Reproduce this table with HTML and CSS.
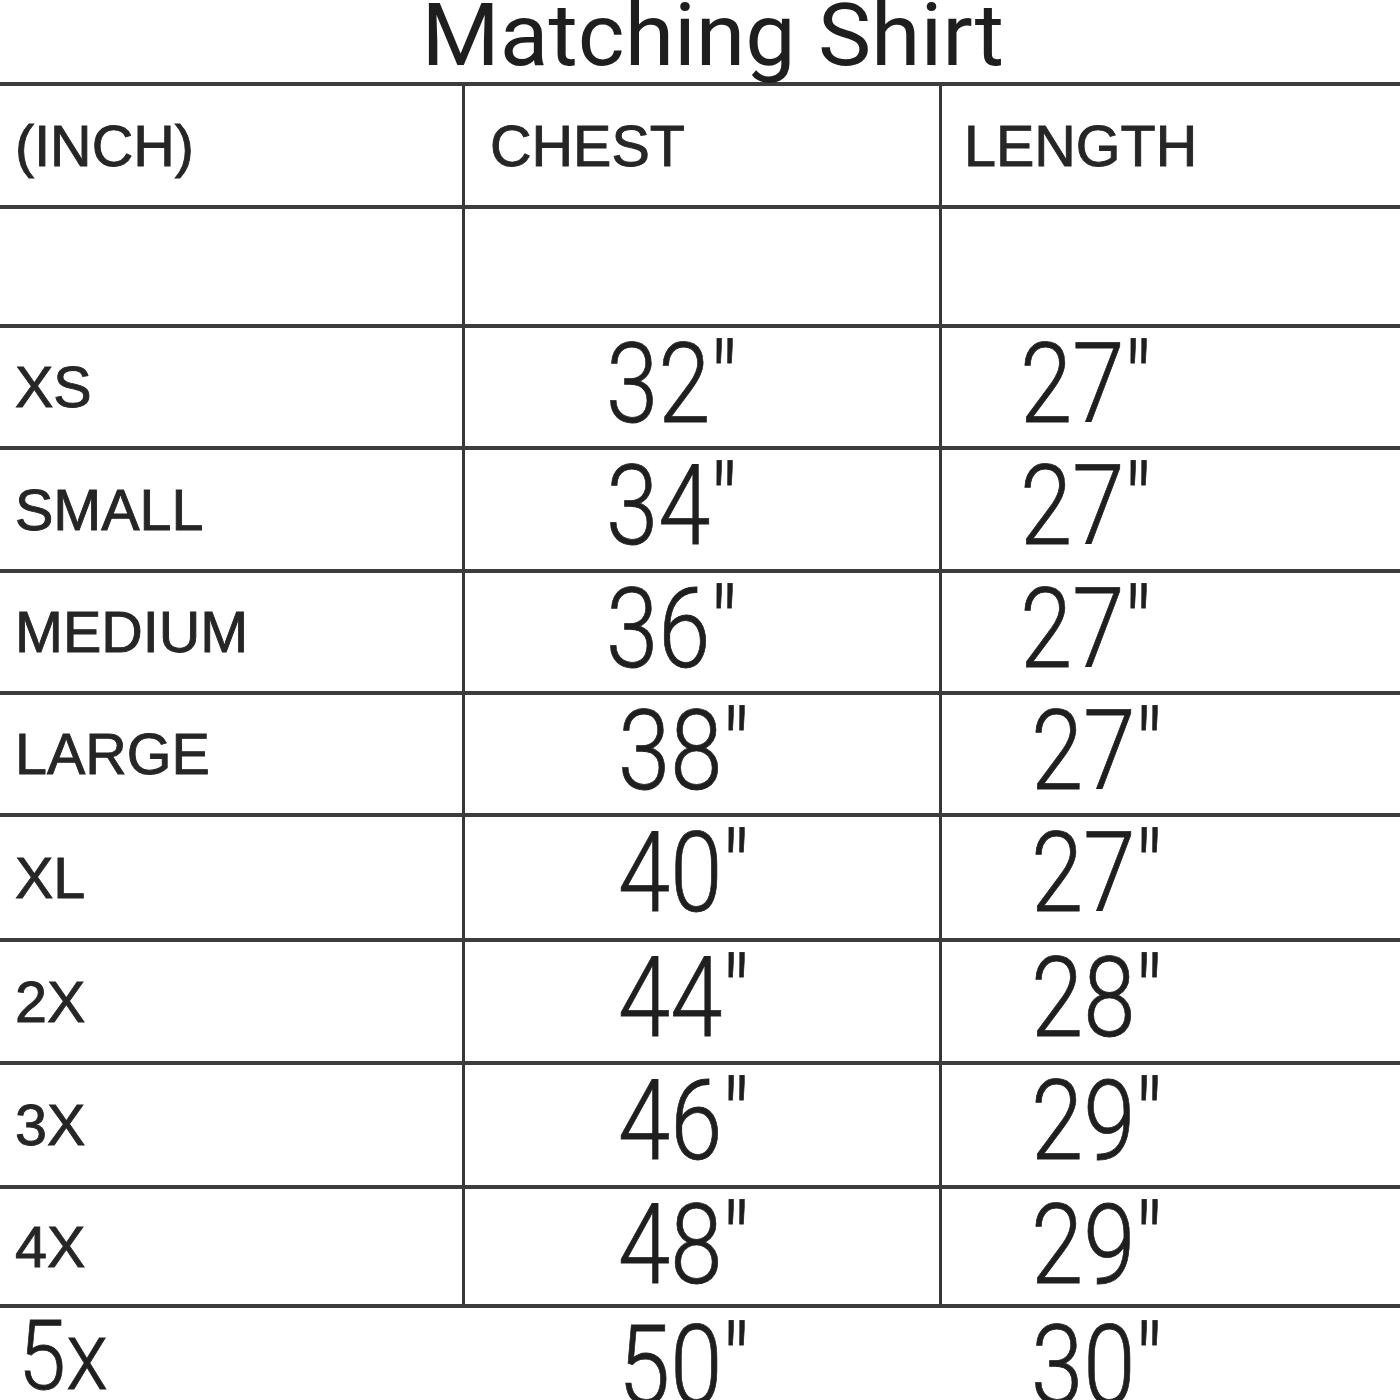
FILE: index.html
```html
<!DOCTYPE html>
<html lang="en">
<head>
<meta charset="utf-8">
<title>Matching Shirt</title>
<link rel="stylesheet" href="styles.css">
</head>
<body>
<div class="chart">
  <h1 class="title"><span class="title-text">Matching Shirt</span></h1>
  <div class="table">
    <div class="row head">
      <div class="cell label">(INCH)</div>
      <div class="cell hd chest-hd">CHEST</div>
      <div class="cell hd len-hd">LENGTH</div>
    </div>
    <div class="row blank">
      <div class="cell label"></div>
      <div class="cell"></div>
      <div class="cell"></div>
    </div>
    <div class="row">
      <div class="cell label">XS</div>
      <div class="cell num chest"><span class="n">32"</span></div>
      <div class="cell num len"><span class="n">27"</span></div>
    </div>
    <div class="row">
      <div class="cell label">SMALL</div>
      <div class="cell num chest"><span class="n">34"</span></div>
      <div class="cell num len"><span class="n">27"</span></div>
    </div>
    <div class="row">
      <div class="cell label">MEDIUM</div>
      <div class="cell num chest"><span class="n">36"</span></div>
      <div class="cell num len"><span class="n">27"</span></div>
    </div>
    <div class="row">
      <div class="cell label">LARGE</div>
      <div class="cell num chest shift"><span class="n">38"</span></div>
      <div class="cell num len shift"><span class="n">27"</span></div>
    </div>
    <div class="row">
      <div class="cell label">XL</div>
      <div class="cell num chest shift"><span class="n">40"</span></div>
      <div class="cell num len shift"><span class="n">27"</span></div>
    </div>
    <div class="row">
      <div class="cell label">2X</div>
      <div class="cell num chest shift"><span class="n">44"</span></div>
      <div class="cell num len shift"><span class="n">28"</span></div>
    </div>
    <div class="row">
      <div class="cell label">3X</div>
      <div class="cell num chest shift"><span class="n">46"</span></div>
      <div class="cell num len shift"><span class="n">29"</span></div>
    </div>
    <div class="row">
      <div class="cell label">4X</div>
      <div class="cell num chest shift"><span class="n">48"</span></div>
      <div class="cell num len shift"><span class="n">29"</span></div>
    </div>
    <div class="row last">
      <div class="cell label-big"><span class="big">5x</span></div>
      <div class="cell num chest shift"><span class="n">50"</span></div>
      <div class="cell num len shift"><span class="n">30"</span></div>
    </div>
  </div>
</div>
</body>
</html>
```

FILE: styles.css
```css
html, body {
  margin: 0;
  padding: 0;
  background: #ffffff;
}

body {
  width: 1400px;
  height: 1400px;
  overflow: hidden;
  color: #222222;
  font-family: "Liberation Sans", Arial, sans-serif;
}

.chart {
  display: flex;
  flex-direction: column;
}

.title {
  margin: 0;
  height: 82px;
  display: flex;
  justify-content: center;
  padding-left: 26px;
  font-family: Roboto, "Noto Sans", sans-serif;
  font-weight: 400;
  font-size: 87px;
  line-height: 70px;
  color: #1e1e1e;
  overflow: visible;
}

.title-text {
  display: inline-block;
  transform: scaleX(1.03);
  transform-origin: center;
  white-space: nowrap;
}

.table {
  display: flex;
  flex-direction: column;
}

.row {
  display: grid;
  grid-template-columns: 462px 477px 1fr;
  box-sizing: border-box;
  border-top: 4px solid #3c3c3c;
  height: 122px;
}

.row:nth-child(1) { height: 123px; }
.row:nth-child(2) { height: 119px; }
.row:nth-child(3) { height: 122px; }
.row:nth-child(4) { height: 123px; }
.row:nth-child(5) { height: 122px; }
.row:nth-child(6) { height: 122px; }
.row:nth-child(7) { height: 125px; }
.row:nth-child(8) { height: 123px; }
.row:nth-child(9) { height: 124px; }
.row:nth-child(10) { height: 119px; }
.row.last { height: 96px; }

.cell {
  box-sizing: border-box;
  display: flex;
  align-items: center;
}

.cell + .cell {
  border-left: 3px solid #383838;
}

.row.last .cell + .cell {
  border-left-color: transparent;
}

.label,
.hd {
  font-size: 57.5px;
  color: #262626;
  -webkit-text-stroke: 0.9px #262626;
  white-space: nowrap;
}

.label {
  padding-left: 15px;
}

.chest-hd {
  padding-left: 25px;
}

.len-hd {
  padding-left: 22px;
}

.num {
  align-items: flex-start;
  font-family: Roboto, "Noto Sans", sans-serif;
  font-weight: 300;
  -webkit-text-stroke: 0.8px #1f1f1f;
  font-size: 112px;
  line-height: 112px;
  color: #1f1f1f;
  overflow: visible;
}

.n {
  display: inline-block;
  transform: scaleX(0.84);
  transform-origin: left top;
  white-space: nowrap;
}

.chest {
  padding-left: 141px;
}

.chest.shift {
  padding-left: 153px;
}

.len {
  padding-left: 78px;
}

.len.shift {
  padding-left: 89px;
}

.row.last .num {
  padding-top: 2px;
}

.label-big {
  align-items: flex-start;
  padding-left: 18px;
  font-family: Roboto, "Noto Sans", sans-serif;
  font-weight: 300;
  -webkit-text-stroke: 0.8px #1f1f1f;
  font-size: 96px;
  line-height: 96px;
  color: #1f1f1f;
}

.big {
  display: inline-block;
  transform: scaleX(0.9);
  transform-origin: left top;
}
```
